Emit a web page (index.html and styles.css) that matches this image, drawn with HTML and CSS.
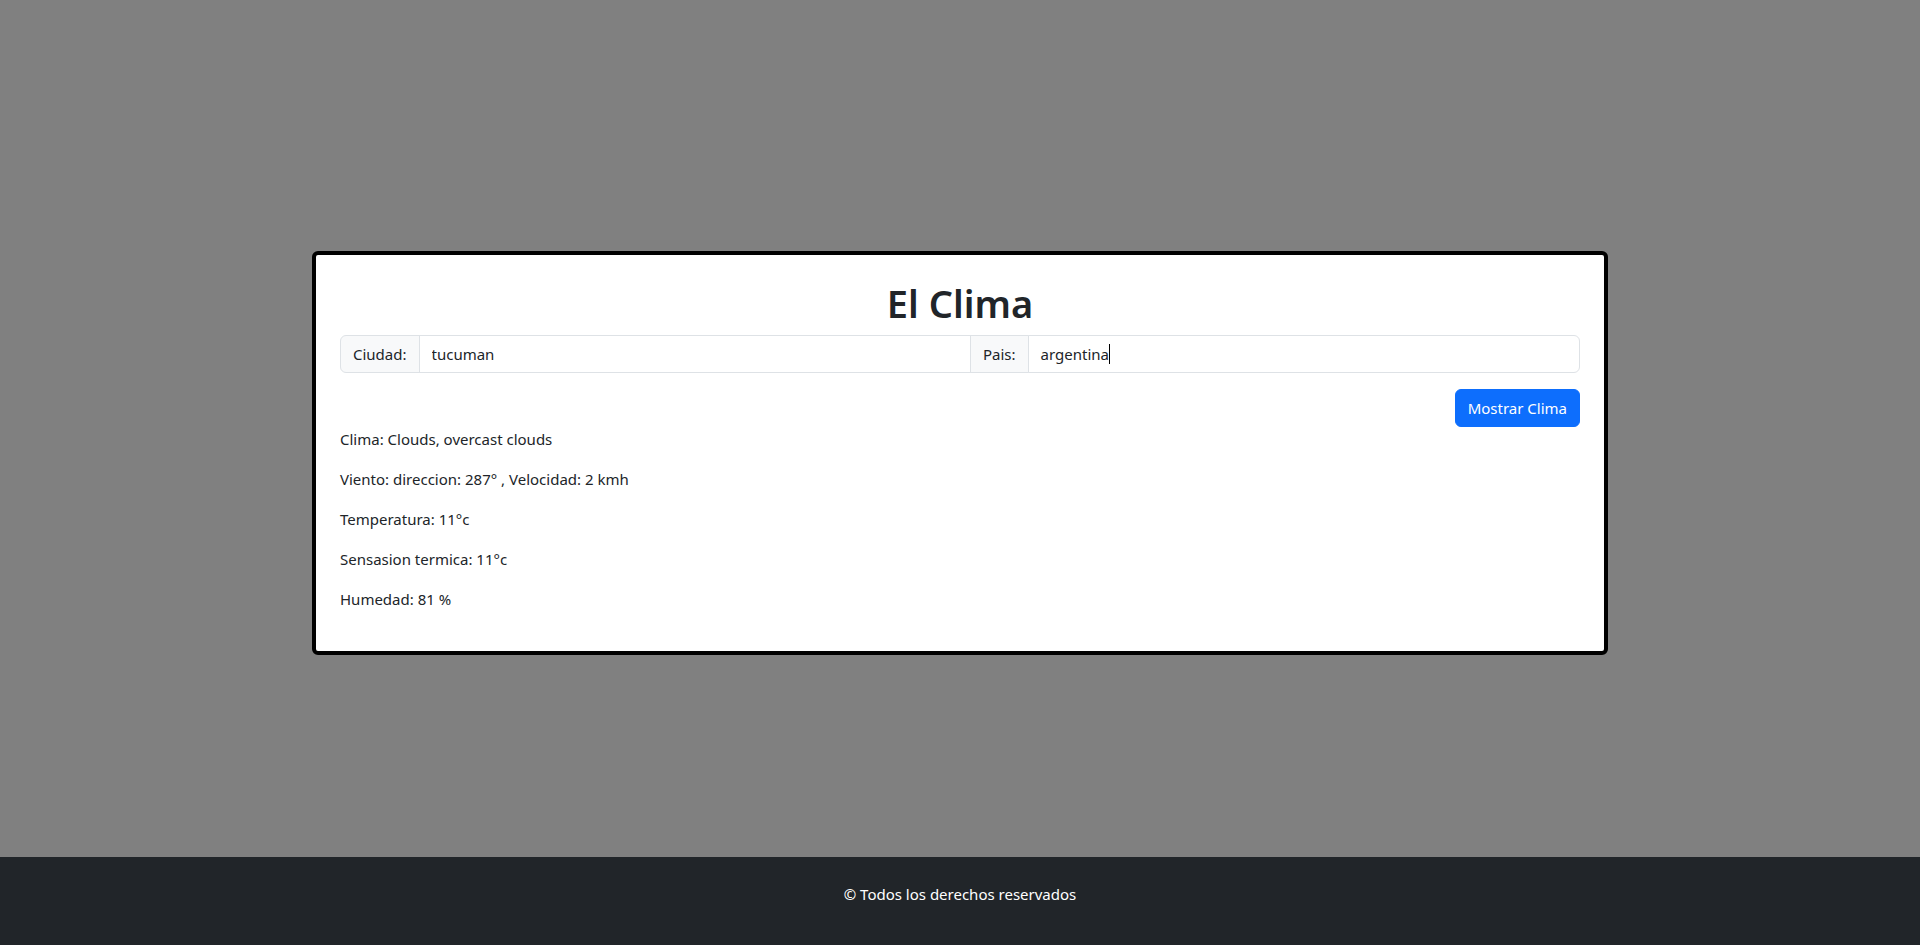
FILE: index.html
```html
<!DOCTYPE html>
<html lang="es">
<head>
<meta charset="utf-8">
<title>El Clima</title>
<link rel="stylesheet" href="styles.css">
</head>
<body>
<main class="page">
  <div class="container">
    <section class="card">
      <h1 class="title">El Clima</h1>
      <form class="input-group">
        <label class="addon" for="ciudad">Ciudad:</label>
        <input class="field" id="ciudad" type="text" value="tucuman">
        <label class="addon" for="pais">Pais:</label>
        <div class="field field-fake"><span>argentina</span><span class="caret"></span></div>
      </form>
      <div class="actions">
        <button class="btn" type="button">Mostrar Clima</button>
      </div>
      <p class="line">Clima: Clouds, overcast clouds</p>
      <p class="line">Viento: direccion: 287° , Velocidad: 2 kmh</p>
      <p class="line">Temperatura: 11°c</p>
      <p class="line">Sensasion termica: 11°c</p>
      <p class="line">Humedad: 81 %</p>
    </section>
  </div>
</main>
<footer class="footer">
  <p class="footer-text">© Todos los derechos reservados</p>
</footer>
</body>
</html>
```

FILE: styles.css
```css
* { box-sizing: border-box; }

html, body { height: 100%; }

body {
  margin: 0;
  min-height: 100vh;
  display: flex;
  flex-direction: column;
  background: #808080;
  color: #212529;
  font-family: "Noto Sans", "Open Sans", sans-serif;
  font-size: 15px;
  line-height: 24px;
}

.page {
  flex: 1;
  display: flex;
  align-items: center;
  padding-top: 48px;
}

.container {
  width: 1296px;
  margin: 0 auto;
}

.card {
  background: #fff;
  border: 4px solid #000;
  border-radius: 6px;
  padding: 24px;
}

.title {
  margin: 0 0 8px;
  text-align: center;
  font-size: 38px;
  line-height: 48px;
  font-weight: 600;
}

.input-group {
  display: flex;
  margin: 0;
}

.addon {
  display: flex;
  align-items: center;
  padding: 6px 12px;
  background: #f8f9fa;
  border: 1px solid #dee2e6;
  color: #212529;
  white-space: nowrap;
}

.addon:first-child {
  border-radius: 6px 0 0 6px;
}

.field {
  flex: 1;
  min-width: 0;
  height: 38px;
  padding: 6px 12px;
  border: 1px solid #dee2e6;
  font: inherit;
  color: #212529;
  background: #fff;
  outline: none;
}

.addon + .field,
.field + .addon {
  margin-left: -1px;
}

.field-fake {
  display: flex;
  align-items: center;
  border-radius: 0 6px 6px 0;
}

.caret {
  display: inline-block;
  width: 1px;
  height: 20px;
  background: #000;
}

.actions {
  display: flex;
  justify-content: flex-end;
  margin-top: 16px;
}

.btn {
  font: inherit;
  color: #fff;
  background: #0d6efd;
  border: 1px solid #0d6efd;
  border-radius: 6px;
  padding: 6px 12px;
  line-height: 24px;
  cursor: pointer;
}

.line {
  margin: 0 0 16px;
}

.footer {
  background: #212529;
  color: #fff;
  text-align: center;
  padding: 25px 0 39px;
}

.footer-text {
  margin: 0;
}
```
